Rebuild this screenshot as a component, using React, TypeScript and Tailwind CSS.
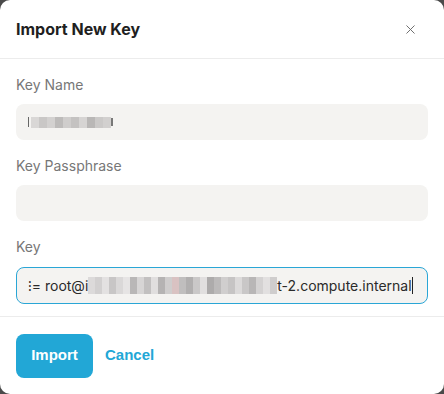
import { X } from 'lucide-react';

const blurA = ['#d9d7d6', '#c9c7c6', '#d3d1d0', '#bdbbba', '#cfcdcc', '#c4c2c1', '#d6d4d3', '#b9b7b6', '#cbc9c8', '#d2d0cf'];
const blurB = [
  '#dcdada', '#d2d0d0', '#e3e1e1', '#c8c6c6', '#dad8d8', '#e6e4e4', '#b9b7b7', '#d7d5d5', '#c2c0c0', '#e0dede',
  '#b5b3b3', '#cfcdcd', '#d9c2c2', '#c0bebe', '#b1afaf', '#cac8c8', '#e1dfdf', '#adabab', '#bcbaba', '#d0cece',
  '#c6c4c4', '#dcdada', '#c9c7c7', '#b8b6b6', '#d4d2d2', '#e2e0e0', '#cfcdcd',
];

export default function App() {
  return (
    <div className="min-h-screen w-full bg-[#4a4a4a]" style={{ fontFamily: 'Inter, "Noto Sans", sans-serif' }}>
      <div className="h-[394px] w-[444px] bg-white rounded-[10px] flex flex-col overflow-hidden">
        {/* Encabezado */}
        <div className="h-[59px] flex items-center justify-between pl-4 pr-[26px] border-b border-[#ececec]">
          <h2 className="text-[16px] font-bold text-[#1f1f1f]">Import New Key</h2>
          <X className="w-[15px] h-[15px] text-[#666]" strokeWidth={1.5} />
        </div>

        {/* Formulario */}
        <div className="flex-1 px-4 pt-[17px] border-b border-[#ececec]">
          <label className="block text-[14px] text-[#777] leading-[18px]">Key Name</label>
          <div className="mt-[10px] h-9 rounded-lg bg-[#f4f3f1] flex items-center pl-[12px]">
            <span className="w-[1px] h-[10px] bg-[#666]" />
            <div className="flex ml-[2px]">
              {blurA.map((c, i) => (
                <span key={i} className="w-[8px] h-[11px]" style={{ backgroundColor: c }} />
              ))}
            </div>
            <span className="w-[2px] h-[8px] bg-[#777]" />
          </div>

          <label className="block mt-[17px] text-[14px] text-[#777] leading-[18px]">Key Passphrase</label>
          <div className="mt-[10px] h-9 rounded-lg bg-[#f4f3f1]" />

          <label className="block mt-[17px] text-[14px] text-[#777] leading-[18px]">Key</label>
          <div className="mt-[11px] h-[37px] rounded-lg bg-[#f4f3f1] border border-[#2aa6d6] flex items-center pl-[11px] overflow-hidden">
            <span className="text-[14px] text-[#2a2a2a] whitespace-nowrap">⁝= root@i</span>
            <div className="flex">
              {blurB.map((c, i) => (
                <span key={i} className="w-[7px] h-[17px]" style={{ backgroundColor: c }} />
              ))}
            </div>
            <span className="text-[14px] text-[#2a2a2a] whitespace-nowrap">t-2.compute.internal</span>
            <span className="w-[1px] h-[17px] bg-[#222]" />
          </div>
        </div>

        {/* Pie */}
        <div className="h-[77px] flex items-center gap-3 px-4">
          <button className="w-[77px] h-[44px] rounded-lg bg-[#22a7d6] text-white text-[15px] font-bold" style={{ fontFamily: '"Liberation Sans", Arial, sans-serif' }}>
            Import
          </button>
          <button className="text-[#22a7d6] text-[15px] font-bold" style={{ fontFamily: '"Liberation Sans", Arial, sans-serif' }}>
            Cancel
          </button>
        </div>
      </div>
    </div>
  );
}
